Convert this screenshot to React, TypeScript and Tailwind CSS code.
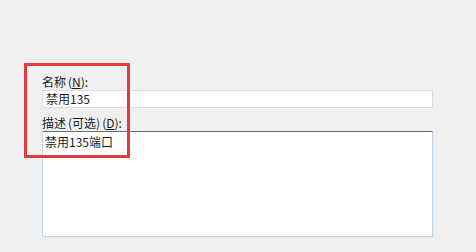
import React from 'react';

const font = { fontFamily: '"Noto Sans CJK SC", "Liberation Sans", sans-serif' };

export default function App() {
  return (
    <div
      className="relative w-[476px] h-[252px] bg-[#f0f0f0] text-[12px] leading-[14px] text-[#1b1b1b] overflow-hidden"
      style={font}
    >
      <div className="flex flex-col pl-[42px] pt-[75px] w-[433px]">
        {/* Name */}
        <label className="h-[14px]">
          名称<span className="ml-[2px]">(</span><span className="underline">N</span>):
        </label>
        <div className="mt-[1px] h-[18px] w-[391px] bg-white border border-[#dcdcdc] pl-[3px] flex items-center">
          禁用135
        </div>

        {/* Description */}
        <label className="mt-[8px] h-[14px]">
          描述<span className="ml-[2px]">(</span>可选)<span className="ml-[2px]">(</span><span className="underline">D</span>):
        </label>
        <div className="mt-[1px] h-[106px] w-[391px] bg-white border border-[#c5d6e4] border-t-[#5d7386] shadow-[1px_1px_0_#e3e8ee] pl-[2px] pt-[3px]">
          禁用135端口
        </div>
      </div>

      {/* Annotation box */}
      <div className="absolute left-[24px] top-[63px] w-[106px] h-[95px] border-[3px] border-[#e23a3e]" />
    </div>
  );
}
